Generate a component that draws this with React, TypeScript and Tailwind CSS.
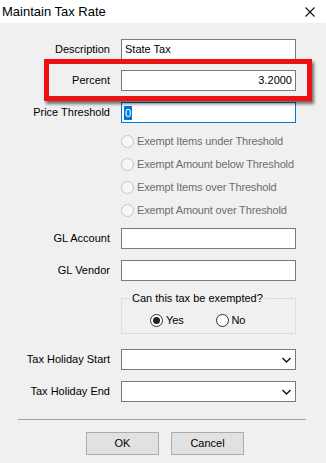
import React from 'react';

const font = { fontFamily: '"Liberation Sans", Arial, sans-serif' };

function Row({ label, children, className = '' }: { label: string; children: React.ReactNode; className?: string }) {
  return (
    <div className={`flex items-center h-[21px] ${className}`}>
      <div className="w-[110px] text-right text-[11px] text-black leading-none">{label}</div>
      <div className="ml-[11px] w-[175px] h-full">{children}</div>
    </div>
  );
}

function TextBox({ value = '', right = false }: { value?: string; right?: boolean }) {
  return (
    <div
      className={`h-full bg-white border border-[#7a7a7a] flex items-center px-[3px] text-[11px] text-black ${
        right ? 'justify-end' : ''
      }`}
    >
      {value}
    </div>
  );
}

function Radio({ label, checked = false, disabled = false }: { label: string; checked?: boolean; disabled?: boolean }) {
  return (
    <div className="flex items-center h-[16px]">
      <div
        className={`w-[13px] h-[13px] rounded-full border flex items-center justify-center ${
          disabled ? 'border-[#c4c4c4] bg-[#f7f7f7]' : 'border-[#333333] bg-white'
        }`}
      >
        {checked && <div className="w-[7px] h-[7px] rounded-full bg-[#222222]" />}
      </div>
      <span
        className={`ml-[3px] text-[11px] leading-none tracking-[-0.15px] ${disabled ? 'text-[#6d6d6d]' : 'text-black'}`}
      >
        {label}
      </span>
    </div>
  );
}

function Combo() {
  return (
    <div className="h-full bg-white border border-[#7a7a7a] flex items-center justify-end pr-[4px]">
      <svg width="9" height="6" viewBox="0 0 9 6" fill="none" stroke="#111" strokeWidth={1.4}>
        <path d="M0.5 1 L4.5 5 L8.5 1" />
      </svg>
    </div>
  );
}

export default function App() {
  return (
    <div className="w-[326px] h-[463px] bg-[#f0f0f0] relative overflow-hidden" style={font}>
      {/* Title bar */}
      <div className="h-[23px] bg-white flex items-center justify-between pl-[2px] pr-[11px]">
        <span className="text-[13px] text-black">Maintain Tax Rate</span>
        <svg width="10" height="10" viewBox="0 0 10 10" stroke="#111" strokeWidth={1.1}>
          <path d="M0.5 0.5 L9.5 9.5 M9.5 0.5 L0.5 9.5" />
        </svg>
      </div>

      <div className="pt-[16px] flex flex-col">
        <Row label="Description">
          <TextBox value="State Tax" />
        </Row>
        <Row label="Percent" className="mt-[10px]">
          <TextBox value="3.2000" right />
        </Row>
        <Row label="Price Threshold" className="mt-[11px]">
          <div className="h-full bg-white border border-[#0078d7] flex items-center px-[2px] text-[11px]">
            <span className="bg-[#0078d7] text-white px-[1px] leading-[14px]">0</span>
          </div>
        </Row>

        <div className="ml-[121px] mt-[10px] flex flex-col gap-[7px]">
          <Radio label="Exempt Items under Threshold" disabled />
          <Radio label="Exempt Amount below Threshold" disabled />
          <Radio label="Exempt Items over Threshold" disabled />
          <Radio label="Exempt Amount over Threshold" disabled />
        </div>

        <Row label="GL Account" className="mt-[10px]">
          <TextBox />
        </Row>
        <Row label="GL Vendor" className="mt-[11px]">
          <TextBox />
        </Row>

        {/* Group box */}
        <div className="ml-[121px] mt-[17px] w-[175px] h-[36px] border border-[#dcdcdc] relative">
          <span className="absolute left-[8px] top-[-8px] bg-[#f0f0f0] px-[2px] text-[11px] text-black leading-[14px]">
            Can this tax be exempted?
          </span>
          <div className="flex items-center pt-[13px] pl-[28px] gap-[32px]">
            <Radio label="Yes" checked />
            <Radio label="No" />
          </div>
        </div>

        <Row label="Tax Holiday Start" className="mt-[15px]">
          <Combo />
        </Row>
        <Row label="Tax Holiday End" className="mt-[11px]">
          <Combo />
        </Row>

        <div className="ml-[18px] mt-[17px] w-[288px] h-px bg-[#a0a0a0]" />

        <div className="mt-[12px] ml-[86px] flex gap-[12px]">
          <button className="w-[73px] h-[23px] bg-[#e1e1e1] border border-[#adadad] text-[11px] text-black">OK</button>
          <button className="w-[73px] h-[23px] bg-[#e1e1e1] border border-[#adadad] text-[11px] text-black">Cancel</button>
        </div>
      </div>

      {/* Red highlight annotation */}
      <div className="absolute left-[44px] top-[59px] w-[268px] h-[42px] border-[5px] border-[#ee1111] shadow-[2px_3px_3px_rgba(0,0,0,0.55)]" />
    </div>
  );
}
